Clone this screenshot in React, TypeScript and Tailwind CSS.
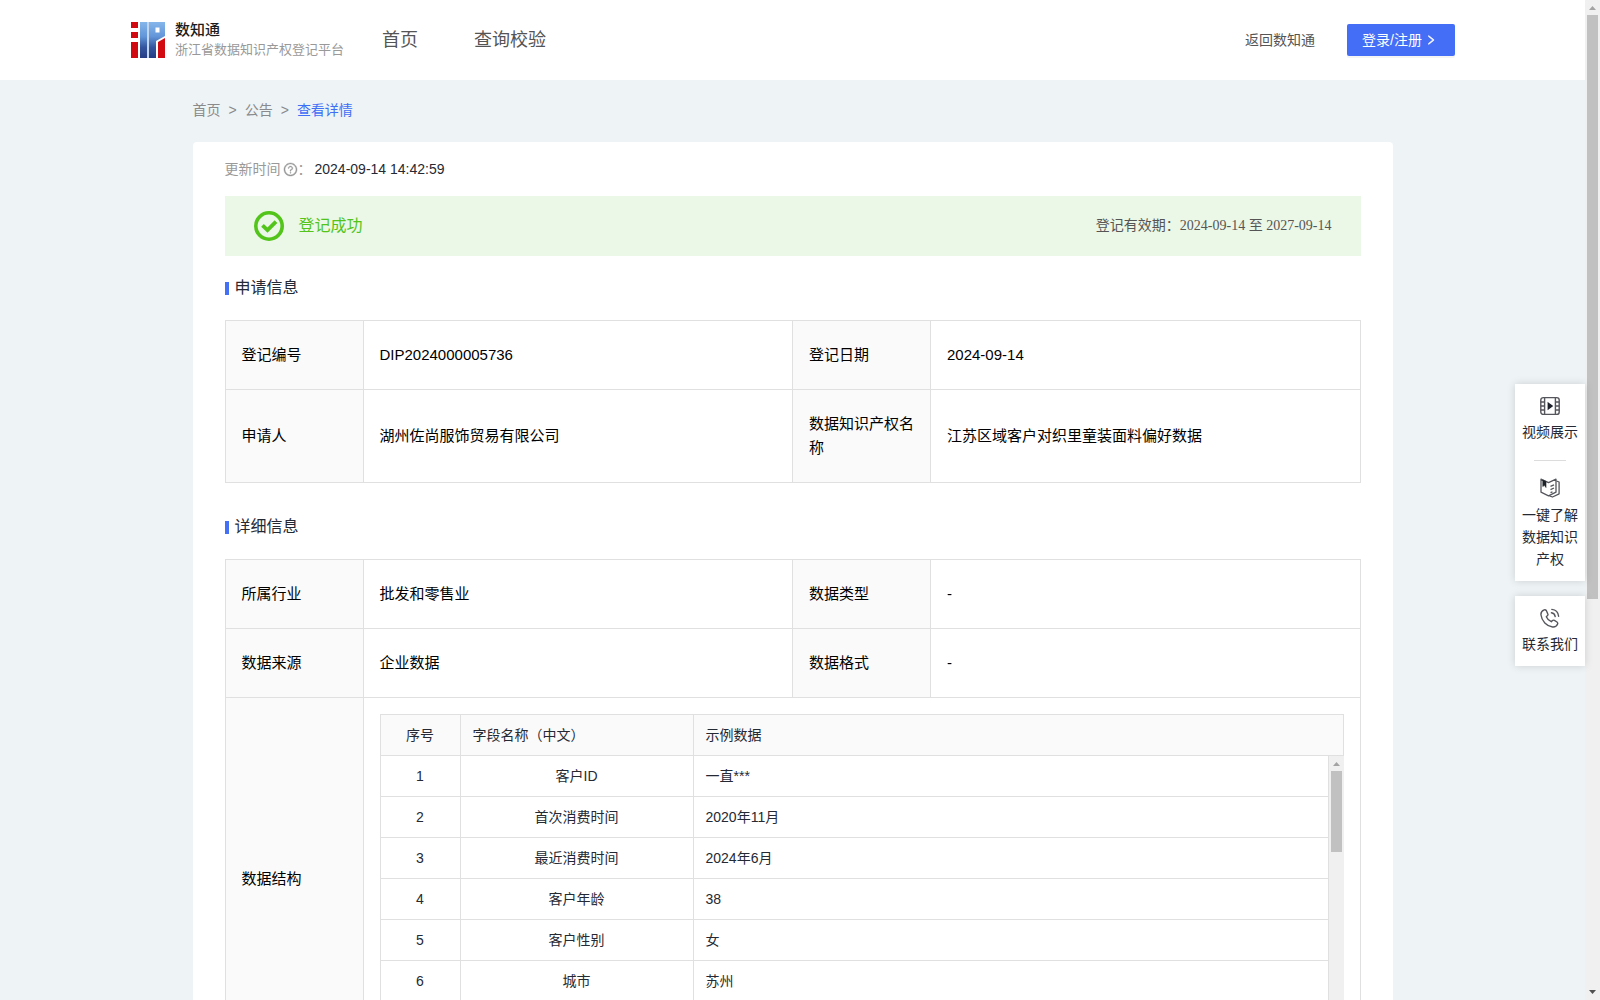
import React from "react";
import { AiOutlineQuestionCircle, AiOutlineRight } from "react-icons/ai";

type Field = { label: string; value: string };

const applyRows: [Field, Field][] = [
  [
    { label: "登记编号", value: "DIP2024000005736" },
    { label: "登记日期", value: "2024-09-14" },
  ],
  [
    { label: "申请人", value: "湖州佐尚服饰贸易有限公司" },
    { label: "数据知识产权名称", value: "江苏区域客户对织里童装面料偏好数据" },
  ],
];

const detailRows: [Field, Field][] = [
  [
    { label: "所属行业", value: "批发和零售业" },
    { label: "数据类型", value: "-" },
  ],
  [
    { label: "数据来源", value: "企业数据" },
    { label: "数据格式", value: "-" },
  ],
];

const structure: [string, string][] = [
  ["客户ID", "一直***"],
  ["首次消费时间", "2020年11月"],
  ["最近消费时间", "2024年6月"],
  ["客户年龄", "38"],
  ["客户性别", "女"],
  ["城市", "苏州"],
];

function Logo() {
  return (
    <svg width="34" height="36" viewBox="0 0 34 36" aria-hidden="true">
      <defs>
        <linearGradient id="logoBlue" x1="0" y1="0" x2="0" y2="1">
          <stop offset="0" stopColor="#86b6ea" />
          <stop offset="0.4" stopColor="#6396d9" />
          <stop offset="0.7" stopColor="#34569f" />
          <stop offset="1" stopColor="#243c84" />
        </linearGradient>
      </defs>
      <path fill="#c3d6f0" d="M16 0h2v36h-2z" />
      <path fill="#d00a10" d="M0 0h7v6H0zM0 10h7v6H0zM0 20h7v16H0zM27 20l7-4v20h-7z" />
      <path
        fill="url(#logoBlue)"
        fillRule="evenodd"
        d="M9 0h7v36H9zM18 0h16v14l-9 5v17h-7zM24.500 5.500v5h4v-5z"
      />
    </svg>
  );
}

function CheckCircle() {
  return (
    <svg width="30" height="30" viewBox="0 0 30 30" fill="none" stroke="#52c41a" aria-hidden="true">
      <circle cx="15" cy="15" r="13.2" strokeWidth="3.6" />
      <path d="M8.500 14.300l5 4.800 8.500-8.400" strokeWidth="3.800" />
    </svg>
  );
}

function VideoIcon() {
  return (
    <svg width="20" height="20" viewBox="0 0 20 20" fill="none" stroke="#55565c" strokeWidth="1.4" aria-hidden="true">
      <rect x="0.8" y="1.600" width="18.400" height="16.800" rx="2.500" />
      <path d="M4.600 1.600v16.800M15.400 1.600v16.800M0.800 6h3.800M0.800 10h3.800M0.800 14h3.800M15.400 6h3.800M15.400 10h3.800M15.400 14h3.800" />
      <path d="M8.300 7.200l3.800 2.800-3.800 2.800z" fill="#1d2129" stroke="#1d2129" />
    </svg>
  );
}

function BookIcon() {
  return (
    <svg width="20" height="20" viewBox="0 0 20 20" fill="none" stroke="#55565c" strokeWidth="1.3" strokeLinejoin="round" aria-hidden="true">
      <path d="M1 1.200l7.500 3.400L16 1.200v13L8.500 17.800 1 14.200z" />
      <path d="M16.500 3l2.600 1v11.800l-6.600 3.200-3-1.200M10.500 8.400l3.500-1.600M10.500 11.600l3.500-1.600M10.500 14.600l2-.8" />
      <path d="M2.800 2v6.500l1.600-1.200L6 9.500V3.400z" fill="#1d2129" stroke="#1d2129" strokeWidth="0.600" />
    </svg>
  );
}

function PhoneIcon() {
  return (
    <svg width="20" height="20" viewBox="0 0 20 20" fill="none" stroke="#55565c" strokeWidth="1.400" strokeLinecap="round" strokeLinejoin="round" aria-hidden="true">
      <path d="M4.200 1.800C2 2.600.7 4.600 1 7c.7 6 5.600 11.200 11.600 12 2.200.2 4.200-1 5-3 .3-.8 0-1.500-.6-2l-2.600-1.600c-.8-.5-1.600-.3-2.200.3l-.9 1c-2.300-1-4-2.700-5-5l1-.9c.7-.6.800-1.500.4-2.200L6.300 2.500C5.800 1.800 5 1.500 4.200 1.800z" />
      <path d="M11.400 4.800c2.100.3 3.500 1.700 3.800 3.800M11.800 1.400c3.800.4 6.400 3 6.800 6.800" />
    </svg>
  );
}

function Arrow({ dir, dark }: { dir: "up" | "down"; dark?: boolean }) {
  return (
    <svg width="15" height="15" viewBox="0 0 15 15" className="shrink-0" aria-hidden="true">
      <path d={dir === "up" ? "M4 10l3.500-4 3.500 4z" : "M4 5l3.500 4 3.500-4z"} fill={dark ? "#505050" : "#a3a3a3"} />
    </svg>
  );
}

function SectionTitle({ children }: { children: React.ReactNode }) {
  return (
    <h2 className="flex items-center gap-1.5 text-base leading-6 text-[#252933]">
      <span className="h-[13px] w-1 bg-[#4370f5]" />
      {children}
    </h2>
  );
}

function InfoTable({ rows, children }: { rows: [Field, Field][]; children?: React.ReactNode }) {
  return (
    <table className="w-full table-fixed border-collapse text-left text-[15px] leading-6 text-black">
      <colgroup>
        <col className="w-[138px]" />
        <col />
        <col className="w-[138px]" />
        <col />
      </colgroup>
      <tbody>
        {rows.map((row) => (
          <tr key={row[0].label}>
            {row.map((f) => (
              <React.Fragment key={f.label}>
                <th className="border border-[#e0e0e0] bg-[#fafafa] px-4 py-[22px] font-normal">{f.label}</th>
                <td className="border border-[#e0e0e0] px-4 py-[22px]">{f.value}</td>
              </React.Fragment>
            ))}
          </tr>
        ))}
        {children}
      </tbody>
    </table>
  );
}

function StructureTable() {
  const cell = "border-r border-b border-[#e0e0e0] px-3 py-[9px] font-normal";
  return (
    <div className="text-sm leading-[22px] text-[#252933]">
      <table className="w-full table-fixed border-separate border-spacing-0 border-t border-l border-[#e0e0e0] bg-[#fafafa]">
        <colgroup>
          <col className="w-20" />
          <col className="w-[233px]" />
          <col />
        </colgroup>
        <thead>
          <tr>
            <th className={cell + " text-center"}>序号</th>
            <th className={cell + " text-left"}>字段名称（中文）</th>
            <th className={cell + " text-left"}>示例数据</th>
          </tr>
        </thead>
      </table>
      <div className="flex h-[287px]">
        <div className="min-w-0 grow overflow-y-auto [scrollbar-width:none]">
          <table className="w-full table-fixed border-separate border-spacing-0 border-l border-[#e0e0e0]">
            <colgroup>
              <col className="w-20" />
              <col className="w-[233px]" />
              <col />
            </colgroup>
            <tbody>
              {structure.map(([name, sample], i) => (
                <tr key={name}>
                  <td className={cell + " text-center"}>{i + 1}</td>
                  <td className={cell + " text-center"}>{name}</td>
                  <td className={cell + " text-left"}>{sample}</td>
                </tr>
              ))}
            </tbody>
          </table>
        </div>
        <div className="flex w-[15px] shrink-0 flex-col items-center bg-[#f0f0f0]">
          <Arrow dir="up" />
          <div className="h-[81px] w-[11px] bg-[#c1c1c1]" />
        </div>
      </div>
    </div>
  );
}

export default function App() {
  return (
    <div className="relative flex h-screen overflow-hidden bg-[#eef3f6] font-['Liberation_Sans','Noto_Sans_CJK_SC',sans-serif]">
      <div className="min-w-0 grow overflow-y-auto [scrollbar-width:none]">
        <header className="flex h-20 items-center bg-white pr-[130px] pl-[131px]">
          <a href="#" className="flex items-center gap-2.5">
            <Logo />
            <span className="flex flex-col">
              <span className="text-[15px] leading-5 font-medium text-[#1c1c1c]">数知通</span>
              <span className="text-[13px] leading-5 text-[#999999]">浙江省数据知识产权登记平台</span>
            </span>
          </a>
          <nav className="ml-[38px] flex gap-14 text-lg text-[#555555]">
            <a href="#">首页</a>
            <a href="#">查询校验</a>
          </nav>
          <div className="ml-auto flex items-center gap-8 text-sm">
            <a href="#" className="text-[#555555]">返回数知通</a>
            <button className="flex h-8 items-center gap-[3px] rounded-xs bg-[#446ef5] pr-[18px] pl-[15px] text-white shadow-[0_2px_0_rgba(0,0,0,0.045)]">
              登录/注册
              <AiOutlineRight size={12} strokeWidth={50} />
            </button>
          </div>
        </header>

        <main className="mx-auto max-w-[1200px]">
          <nav aria-label="breadcrumb" className="flex gap-2 pt-[19px] pb-[21px] text-sm leading-[22px] text-[#8a8a8c]">
            <a href="#">首页</a>
            <span>&gt;</span>
            <a href="#">公告</a>
            <span>&gt;</span>
            <a href="#" className="text-[#3f6ff5]">查看详情</a>
          </nav>

          <div className="rounded-t bg-white px-8 pt-4 pb-8">
            <p className="flex items-center text-sm leading-[22px] text-[#252933]">
              <span className="flex items-center text-[#999999]">
                更新时间
                <AiOutlineQuestionCircle size={15} strokeWidth={24} className="ml-0.5" />：
              </span>
              <span className="ml-[3px]">2024-09-14 14:42:59</span>
            </p>

            <div className="mt-4 flex h-[60px] items-center justify-between bg-[#ebf7e7] pr-[29px] pl-[29px]">
              <span className="flex items-center gap-[15px] text-base text-[#52c41a]">
                <CheckCircle />
                登记成功
              </span>
              <span className="font-['Liberation_Serif','Noto_Sans_CJK_SC',serif] text-sm text-[#555555]">
                登记有效期：2024-09-14 至 2027-09-14
              </span>
            </div>

            <div className="mt-5 mb-5">
              <SectionTitle>申请信息</SectionTitle>
            </div>
            <InfoTable rows={applyRows} />

            <div className="mt-8 mb-5">
              <SectionTitle>详细信息</SectionTitle>
            </div>
            <InfoTable rows={detailRows}>
              <tr>
                <th className="border border-[#e0e0e0] bg-[#fafafa] px-4 font-normal">数据结构</th>
                <td colSpan={3} className="border border-[#e0e0e0] p-4">
                  <StructureTable />
                </td>
              </tr>
            </InfoTable>
          </div>
        </main>
      </div>

      <aside className="absolute top-[384px] right-[15px] flex w-[70px] flex-col gap-[15px] text-center text-sm leading-[22px] text-[#252933]">
        <div className="flex flex-col items-center bg-white px-[7px] pt-3 pb-[11px] shadow-[0_0_8px_rgba(0,0,0,0.15)]">
          <a href="#" className="flex flex-col items-center gap-[5px]">
            <VideoIcon />
            视频展示
          </a>
          <span className="my-[17px] h-px w-8 bg-[#dcdcdc]" />
          <a href="#" className="flex flex-col items-center gap-1.5">
            <BookIcon />
            一键了解数据知识产权
          </a>
        </div>
        <a href="#" className="flex flex-col items-center gap-[5px] bg-white px-[7px] pt-3 pb-[11px] shadow-[0_0_8px_rgba(0,0,0,0.15)]">
          <PhoneIcon />
          联系我们
        </a>
      </aside>

      <div className="flex w-[15px] shrink-0 flex-col items-center bg-[#f0f0f0]">
        <Arrow dir="up" />
        <div className="w-[11px] grow-[584] bg-[#c1c1c1]" />
        <div className="grow-[386]" />
        <Arrow dir="down" dark />
      </div>
    </div>
  );
}
